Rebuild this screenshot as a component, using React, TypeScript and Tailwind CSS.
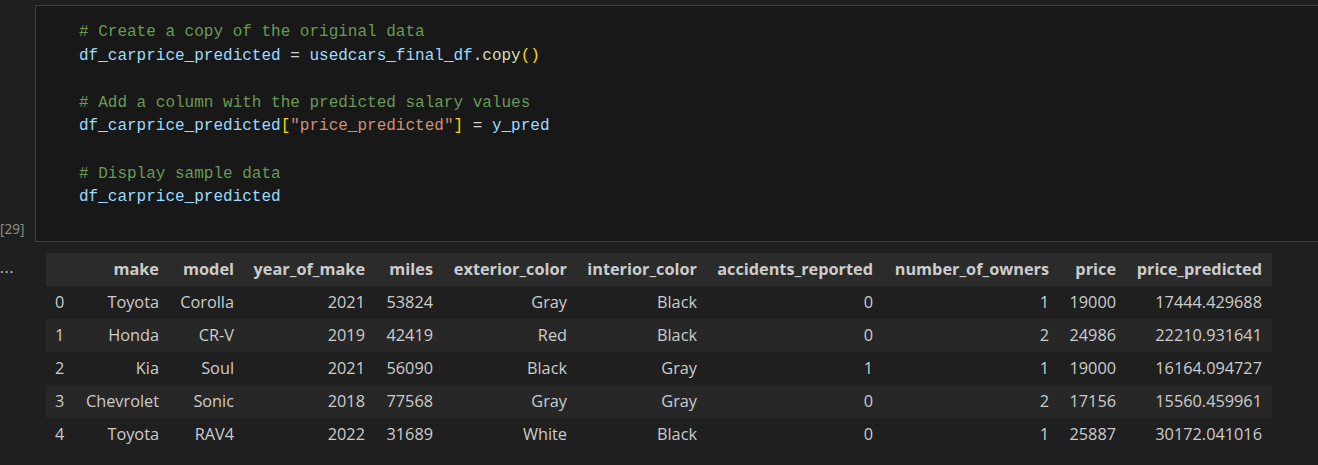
import React from 'react';

type Tok = [string, string];

const C = {
    comment: 'text-[#6a9955]',
    variable: 'text-[#9cdcfe]',
    op: 'text-[#d4d4d4]',
    fn: 'text-[#dcdcaa]',
    bracket: 'text-[#ffd700]',
    str: 'text-[#ce9178]',
};

const CODE: Tok[][] = [
    [[C.comment, '# Create a copy of the original data']],
    [[C.variable, 'df_carprice_predicted'], [C.op, ' = '], [C.variable, 'usedcars_final_df'], [C.op, '.'], [C.fn, 'copy'], [C.bracket, '()']],
    [],
    [[C.comment, '# Add a column with the predicted salary values']],
    [[C.variable, 'df_carprice_predicted'], [C.bracket, '['], [C.str, '"price_predicted"'], [C.bracket, ']'], [C.op, ' = '], [C.variable, 'y_pred']],
    [],
    [[C.comment, '# Display sample data']],
    [[C.variable, 'df_carprice_predicted']],
];

const COLUMNS = [
    { name: '', width: 30 },
    { name: 'make', width: 93 },
    { name: 'model', width: 75 },
    { name: 'year_of_make', width: 131 },
    { name: 'miles', width: 68 },
    { name: 'exterior_color', width: 134 },
    { name: 'interior_color', width: 130 },
    { name: 'accidents_reported', width: 176 },
    { name: 'number_of_owners', width: 176 },
    { name: 'price', width: 67 },
    { name: 'price_predicted', width: 146 },
];

const ROWS: string[][] = [
    ['0', 'Toyota', 'Corolla', '2021', '53824', 'Gray', 'Black', '0', '1', '19000', '17444.429688'],
    ['1', 'Honda', 'CR-V', '2019', '42419', 'Red', 'Black', '0', '2', '24986', '22210.931641'],
    ['2', 'Kia', 'Soul', '2021', '56090', 'Black', 'Gray', '1', '1', '19000', '16164.094727'],
    ['3', 'Chevrolet', 'Sonic', '2018', '77568', 'Gray', 'Gray', '0', '2', '17156', '15560.459961'],
    ['4', 'Toyota', 'RAV4', '2022', '31689', 'White', 'Black', '0', '1', '25887', '30172.041016'],
];

export default function App() {
    return (
        <div className="w-full h-[465px] overflow-hidden bg-[#1f1f1f] pt-[5px]">
            {/* code cell */}
            <div className="flex">
                <div className="w-[35px] shrink-0 flex items-end pb-[4px]">
                    <span className="text-[13.5px] leading-[18px] text-[#8b8b8b] font-['Noto_Sans',sans-serif]">[29]</span>
                </div>
                <div className="flex-1 h-[237px] bg-[#181818] border-y border-l border-[#3f3f3f] pl-[43px] pt-[15px]">
                    <div className="font-['Liberation_Mono',monospace] text-[16px] leading-[23.6px] whitespace-pre">
                        {CODE.map((line, i) => (
                            <div key={i} className="h-[23.6px]">
                                {line.map(([cls, text], j) => (
                                    <span key={j} className={cls}>{text}</span>
                                ))}
                            </div>
                        ))}
                    </div>
                </div>
            </div>

            {/* output */}
            <div className="flex mt-[11px]">
                <div className="w-[46px] shrink-0 pt-[2px]">
                    <span className="text-[14px] leading-[14px] text-[#cccccc] font-['Noto_Sans',sans-serif] tracking-[1px]">...</span>
                </div>
                <table className="table-fixed border-collapse font-['Open_Sans',sans-serif] text-[16.3px] text-[#cccccc] w-[1226px]">
                    <colgroup>
                        {COLUMNS.map((c, i) => (
                            <col key={i} style={{ width: c.width }} />
                        ))}
                    </colgroup>
                    <thead>
                        <tr className="h-[33px] bg-[#2b2b2b]">
                            {COLUMNS.map((c, i) => (
                                <th key={i} className="pr-[10px] text-right font-bold whitespace-nowrap">{c.name}</th>
                            ))}
                        </tr>
                    </thead>
                    <tbody>
                        {ROWS.map((row, r) => (
                            <tr key={r} className={`h-[33px] ${r % 2 === 1 ? 'bg-[#272727]' : ''}`}>
                                {row.map((cell, i) => (
                                    <td key={i} className={`whitespace-nowrap ${i === 0 ? 'text-left pl-[9px]' : 'text-right pr-[10px]'}`}>{cell}</td>
                                ))}
                            </tr>
                        ))}
                    </tbody>
                </table>
            </div>
        </div>
    );
}
